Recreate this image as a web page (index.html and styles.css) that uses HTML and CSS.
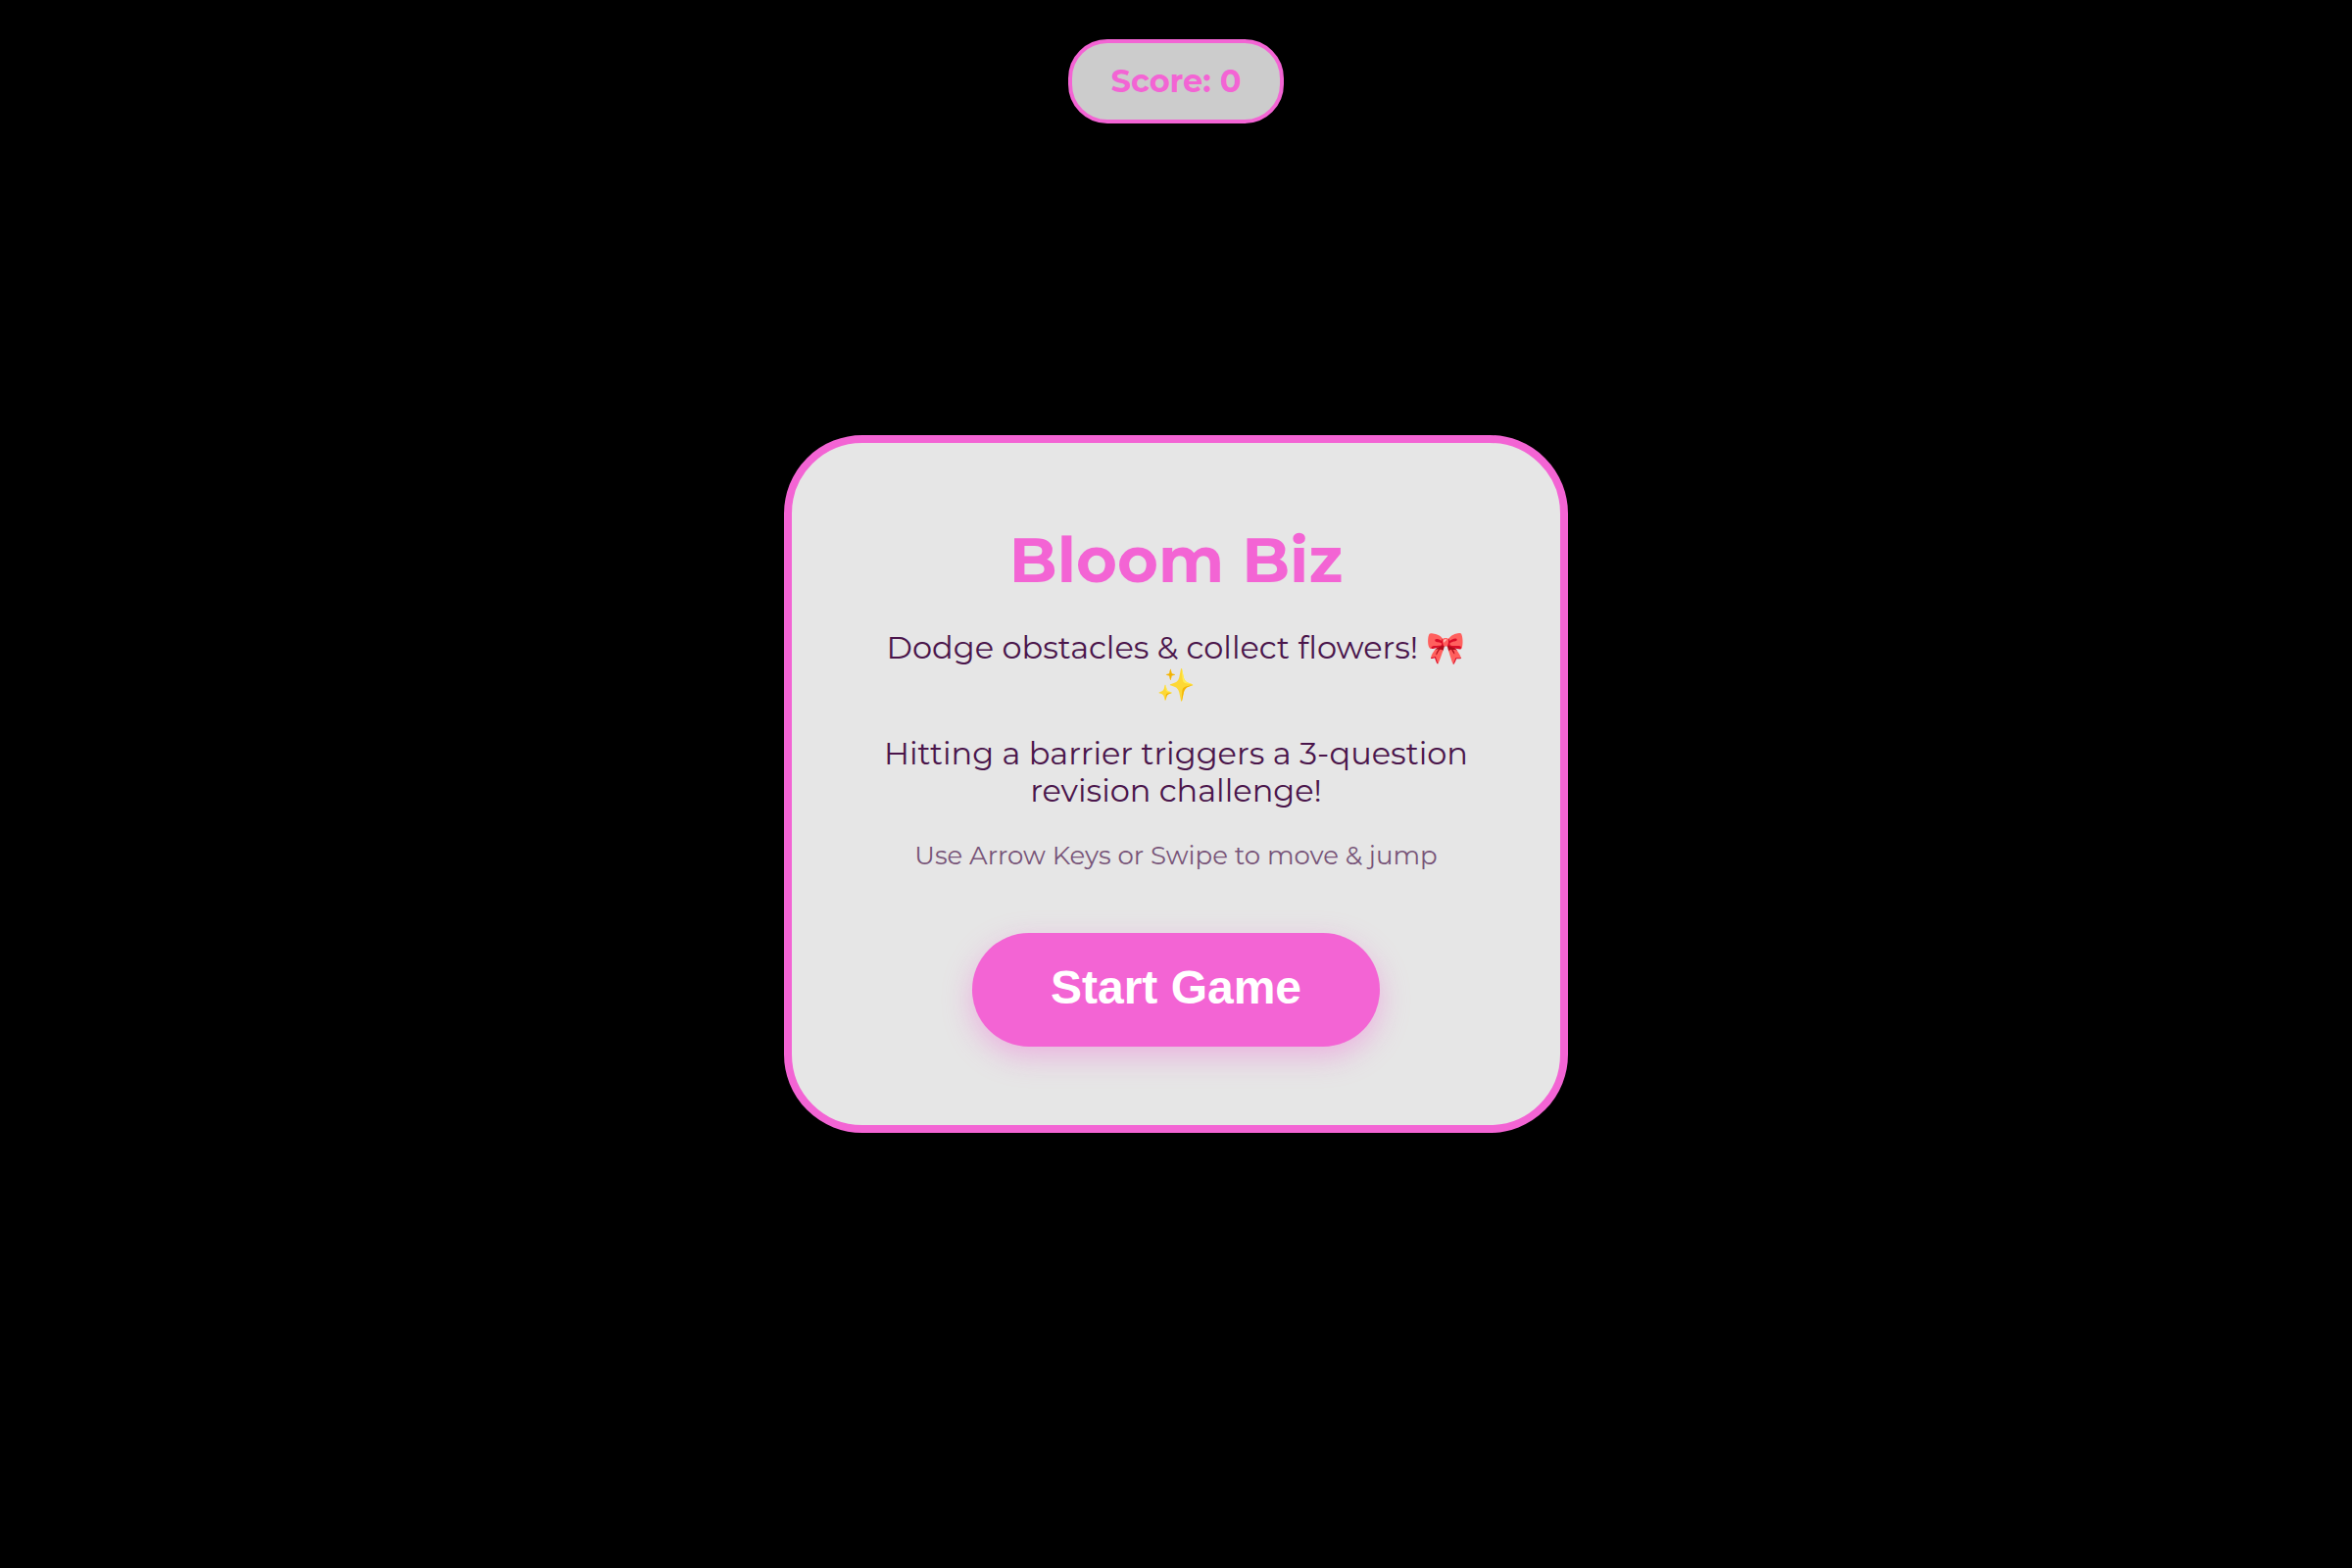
FILE: index.html
```html
<!DOCTYPE html>
<html lang="en">
<head>
<meta charset="utf-8">
<meta name="viewport" content="width=device-width, initial-scale=1">
<title>Bloom Biz</title>
<link rel="stylesheet" href="styles.css">
</head>
<body>
<div class="game">
  <header class="hud">
    <div class="score">Score: 0</div>
  </header>
  <main class="card">
    <h1 class="title">Bloom Biz</h1>
    <p class="text">Dodge obstacles &amp; collect flowers! 🎀 ✨</p>
    <p class="text">Hitting a barrier triggers a 3-question revision challenge!</p>
    <p class="hint">Use Arrow Keys or Swipe to move &amp; jump</p>
    <button class="start" type="button">Start Game</button>
  </main>
</div>
</body>
</html>
```
FILE: styles.css
```css
* {
  box-sizing: border-box;
}

body {
  margin: 0;
  background: #000;
  color: #4a154b;
  font-family: Montserrat, Inter, "Noto Color Emoji", sans-serif;
}

.game {
  display: grid;
  grid-template-rows: 1fr auto 1fr;
  justify-items: center;
  min-height: 100vh;
}

.hud {
  padding-top: 40px;
}

.score {
  padding: 20px 40px;
  border: 4px solid #f364d4;
  border-radius: 40px;
  background: #ccc;
  color: #f364d4;
  font-size: 32px;
  font-weight: 700;
  line-height: 38px;
}

.card {
  display: flex;
  flex-direction: column;
  align-items: center;
  gap: 32px;
  width: 100%;
  max-width: 800px;
  padding: 80px;
  border: 8px solid #f364d4;
  border-radius: 80px;
  background: #e6e6e6;
  text-align: center;
}

.title,
.text,
.hint {
  margin: 0;
}

.title {
  color: #f364d4;
  font-size: 64px;
  font-weight: 700;
  line-height: 78px;
}

.text {
  font-size: 32px;
  line-height: 38px;
}

.hint {
  font-size: 26px;
  line-height: 30px;
  opacity: 0.7;
}

.start {
  margin-top: 32px;
  padding: 28px 80px 32px;
  border: 0;
  border-radius: 60px;
  background: #f364d4;
  box-shadow: 0 10px 30px rgba(243, 100, 212, 0.4);
  color: #fff;
  font-family: "Liberation Sans", Arial, sans-serif;
  font-size: 48px;
  font-weight: 700;
  line-height: 56px;
}
```
